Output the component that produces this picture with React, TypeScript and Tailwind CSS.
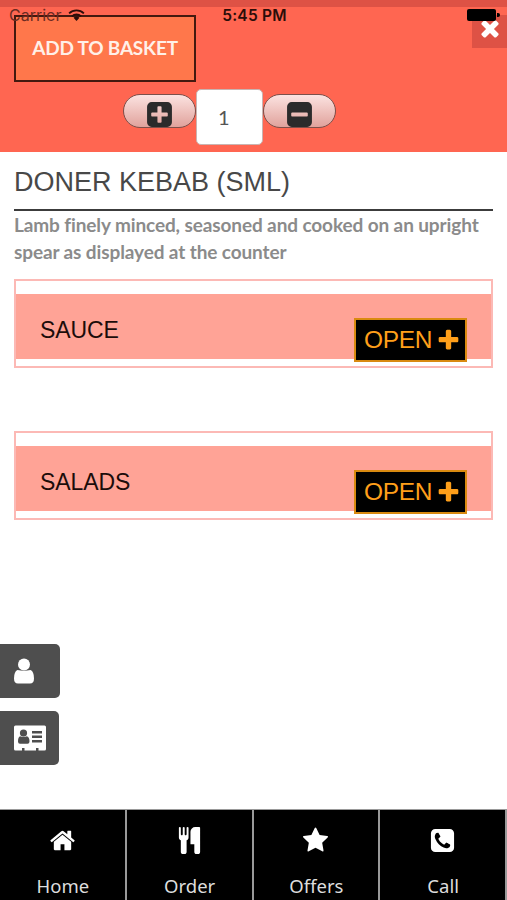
import { clsx } from 'clsx';

const SQUARE = 'm256-544v960q0 119-84.5 203.5t-203.5 84.5h-960q-119 0-203.5-84.5t-84.5-203.5v-960q0-119 84.5-203.5t203.5-84.5h960q119 0 203.5 84.5t84.5 203.5z';

const ICONS = {
  home: 'M1472 992v480q0 26-19 45t-45 19h-384v-384h-256v384h-384q-26 0-45-19t-19-45v-480q0-1 .5-3t.5-3l575-474 575 474q1 2 1 6zm223-69l-62 74q-8 9-21 11h-3q-13 0-21-7l-692-577-692 577q-12 8-24 7-13-2-21-11l-62-74q-8-10-7-23.5t11-21.5l719-599q32-26 76-26t76 26l244 204v-195q0-14 9-23t23-9h192q14 0 23 9t9 23v408l219 182q10 8 11 21.5t-7 23.5z',
  cutlery: 'M832 64v640q0 61-35.5 111t-92.5 70v779q0 52-38 90t-90 38h-128q-52 0-90-38t-38-90v-779q-57-20-92.5-70t-35.5-111v-640q0-26 19-45t45-19 45 19 19 45v416q0 26 19 45t45 19 45-19 19-45v-416q0-26 19-45t45-19 45 19 19 45v416q0 26 19 45t45 19 45-19 19-45v-416q0-26 19-45t45-19 45 19 19 45zm768 0v1600q0 52-38 90t-90 38h-128q-52 0-90-38t-38-90v-512h-224q-13 0-22.5-9.5t-9.5-22.5v-800q0-132 94-226t226-94h256q26 0 45 19t19 45z',
  star: 'M1728 647q0 22-26 48l-363 354 86 500q1 7 1 20 0 21-10.5 35.5t-30.5 14.5q-19 0-40-12l-449-236-449 236q-22 12-40 12-21 0-31.5-14.5t-10.5-35.5q0-6 2-20l86-500-364-354q-25-27-25-48 0-37 56-46l502-73 225-455q19-41 49-41t49 41l225 455 502 73q56 9 56 46z',
  phone: 'M1408 1193q0-11-2-16t-18-16.5-40.5-25-47.5-26.5-45.5-25-28.5-15q-5-3-19-13t-25-15-21-5q-15 0-36.5 20.5t-39.5 45-38.5 45-33.5 20.5q-7 0-16.5-3.5t-15.5-6.5-17-9.5-14-8.5q-99-55-170-126.5t-127-170.5q-2-3-8.5-14t-9.5-17-6.5-15.5-3.5-16.5q0-13 20.5-33.5t45-38.5 45-39.5 20.5-36.5q0-10-5-21t-15-25-13-19q-3-6-15-28.5t-25-45.5-26.5-47.5-25-40.5-16.5-18-16-2q-48 0-101 22-46 21-80 94.5t-34 130.5q0 16 2.5 34t5 30.5 9 33 10 29.5 12.5 33 11 30q60 164 216.5 320.5t320.5 216.5q6 2 30 11t33 12.5 29.5 10 33 9 30.5 5 34 2.5q57 0 130.5-34t94.5-80q22-53 22-101zm256-777v960q0 119-84.5 203.5t-203.5 84.5h-960q-119 0-203.5-84.5t-84.5-203.5v-960q0-119 84.5-203.5t203.5-84.5h960q119 0 203.5 84.5t84.5 203.5z',
  close: 'M1490 1322q0 40-28 68l-136 136q-28 28-68 28t-68-28l-294-294-294 294q-28 28-68 28t-68-28l-136-136q-28-28-28-68t28-68l294-294-294-294q-28-28-28-68t28-68l136-136q28-28 68-28t68 28l294 294 294-294q28-28 68-28t68 28l136 136q28 28 28 68t-28 68l-294 294 294 294q28 28 28 68z',
  plus: 'M1600 736v192q0 40-28 68t-68 28h-416v416q0 40-28 68t-68 28h-192q-40 0-68-28t-28-68v-416h-416q-40 0-68-28t-28-68v-192q0-40 28-68t68-28h416v-416q0-40 28-68t68-28h192q40 0 68 28t28 68v416h416q40 0 68 28t28 68z',
  plusSquare: 'M1408 960v-128q0-26-19-45t-45-19h-320v-320q0-26-19-45t-45-19h-128q-26 0-45 19t-19 45v320h-320q-26 0-45 19t-19 45v128q0 26 19 45t45 19h320v320q0 26 19 45t45 19h128q26 0 45-19t19-45v-320h320q26 0 45-19t19-45z' + SQUARE,
  minusSquare: 'M1408 960v-128q0-26-19-45t-45-19h-896q-26 0-45 19t-19 45v128q0 26 19 45t45 19h896q26 0 45-19t19-45z' + SQUARE,
};

type IconName = keyof typeof ICONS;

function Icon({ name, className }: { name: IconName; className?: string }) {
  return (
    <svg viewBox="0 0 1792 1792" fill="currentColor" className={clsx('shrink-0', className)}>
      <path d={ICONS[name]} />
    </svg>
  );
}

const TABS: { label: string; icon: IconName }[] = [
  { label: 'Home', icon: 'home' },
  { label: 'Order', icon: 'cutlery' },
  { label: 'Offers', icon: 'star' },
  { label: 'Call', icon: 'phone' },
];

// iOS status bar, sits over the header
function StatusBar() {
  return (
    <div className="pointer-events-none absolute inset-x-0 top-0 z-10 h-[30px] font-['Inter','Liberation_Sans',sans-serif] text-[#2b0d09]">
      <div className="h-[7px] bg-[#de5245]" />
      <div className="flex h-4 items-center justify-between pl-[9px] pr-[7px]">
        <div className="flex w-[180px] items-center gap-[7px]">
          <span className="text-[16px] leading-4 text-[#6c2b22]">Carrier</span>
          <svg viewBox="0 0 18 13" className="-mt-px h-[12px] w-[17px]" fill="none" stroke="currentColor" strokeWidth="2">
            <path d="M1 4.8a11.5 11.5 0 0 1 16 0M4 8a7.2 7.2 0 0 1 10 0" />
            <path d="M5.8 9.6a4.6 4.6 0 0 1 6.4 0L9 13z" fill="currentColor" stroke="none" />
          </svg>
        </div>
        <span className="pt-px text-[15.5px] font-semibold leading-4 tracking-[0.25px]">5:45 PM</span>
        <div className="flex w-[180px] items-center justify-end gap-px">
          <span className="h-3 w-[29px] rounded-[2px] bg-black" />
          <span className="h-1 w-[3px] rounded-r-full bg-black" />
        </div>
      </div>
    </div>
  );
}

function StepButton({ icon }: { icon: IconName }) {
  return (
    <button className="flex h-[34px] w-[73px] items-end justify-center rounded-full border border-[#7c4f4a] bg-linear-to-b from-[#fbe3e1] to-[#e0a29c] text-[#2b2b2b]">
      <Icon name={icon} className="-mb-[2px] size-[29px]" />
    </button>
  );
}

function OptionGroup({ title }: { title: string }) {
  return (
    <section className="h-[89px] border-2 border-[#fcb9b5] pt-[13px]">
      <div className="flex h-[65px] items-start justify-between bg-[#ffa396] pl-6 pr-6">
        <h2 className="pt-[22px] text-[23px] leading-[28px] tracking-[-0.1px] text-[#1c0c0a]">{title}</h2>
        <button className="mt-[24px] flex h-[44px] w-[113px] items-center justify-center gap-[5px] border-2 border-[#d98a10] bg-black pl-[3px] pt-px text-[#ff9f1a]">
          <span className="text-[24.5px] leading-none tracking-[-0.3px]">OPEN</span>
          <Icon name="plus" className="size-[25px] -mx-[1px] -mt-px" />
        </button>
      </div>
    </section>
  );
}

export default function App() {
  return (
    <div className="relative flex h-[900px] w-[507px] flex-col overflow-hidden bg-white font-['Liberation_Sans',sans-serif]">
      <StatusBar />

      <header className="flex h-[152px] shrink-0 flex-col bg-[#ff6651]">
        <div className="flex items-start justify-between pl-[14px] pt-[15px]">
          <button className="h-[67px] w-[182px] border-2 border-[#44190f] bg-[#ff774b] font-['Lato',sans-serif] text-[19px] font-bold tracking-[-0.2px] text-[#fff0e8]">
            ADD TO BASKET
          </button>
          <button className="flex h-[33px] w-[35px] items-center justify-center bg-[#de5245] text-white">
            <Icon name="close" className="mb-[7px] size-[26px]" />
          </button>
        </div>
        <div className="mt-[7px] flex items-start pl-[123px]">
          <div className="pt-[5px]"><StepButton icon="plusSquare" /></div>
          <div className="flex h-[56px] w-[67px] items-center rounded-[5px] border border-[#c9b4b1] bg-white pl-[21px] font-['Lato',sans-serif] text-[20px] text-[#555]">
            1
          </div>
          <div className="pt-[5px]"><StepButton icon="minusSquare" /></div>
        </div>
      </header>

      <main className="flex-1 px-[14px] pt-[14px]">
        <h1 className="h-[45px] border-b-2 border-[#3c3c3c] text-[27px] leading-[32px] text-[#484848]">DONER KEBAB (SML)</h1>
        <p className="h-[68px] font-['Lato',sans-serif] text-[19px] font-bold leading-[27px] tracking-[-0.11px] text-[#8b8b8b]">
          Lamb finely minced, seasoned and cooked on an upright<br />spear as displayed at the counter
        </p>
        <div className="flex flex-col gap-[63px]">
          <OptionGroup title="SAUCE" />
          <OptionGroup title="SALADS" />
        </div>
      </main>

      {/* Accesos laterales */}
      <aside className="absolute left-0 top-[644px] flex flex-col gap-[13px] text-white">
        <button className="flex h-[54px] w-[60px] items-center rounded-r-[5px] bg-[#4e4e4e] pl-[14px]">
          <svg viewBox="0 0 20 26" className="h-[26px] w-5" fill="currentColor">
            <circle cx="10" cy="6.5" r="6" />
            <path d="M3.500 12Q10 13.500 16.500 12Q20 13.500 20 20.500Q20 25.500 16 25.500H4Q0 25.500 0 20.500Q0 13.500 3.500 12z" />
          </svg>
        </button>
        <button className="flex h-[54px] w-[59px] items-center rounded-r-[5px] bg-[#4e4e4e] pl-[14px]">
          <svg viewBox="0 0 32 26" className="h-[26px] w-8" fill="currentColor">
            <rect y="0.500" width="32" height="25" rx="1.500" />
            <g fill="#4e4e4e">
              <circle cx="9.500" cy="8" r="3.600" />
              <path d="M6 11.200Q9.500 12.500 13 11.200Q15.500 12 15.500 16.500Q15.500 18.700 13.500 18.700H6Q4 18.700 4 16.500Q4 12 6 11.200z" />
              <path d="M18 6h10v2.500H18zM18 10.500h10v2.500H18zM18 15h10v2.500H18zM8 23h2.500v3H8zM22 23h2.500v3h-2.500z" />
            </g>
          </svg>
        </button>
      </aside>

      <nav className="flex h-[91px] shrink-0 border-t border-[#999] bg-black font-['Noto_Sans',sans-serif] text-[#ddd]">
        {TABS.map((tab) => (
          <a key={tab.label} className="flex flex-1 flex-col items-center border-r-2 border-[#999] pt-[17px]">
            <Icon name={tab.icon} className="size-[27px] text-white" />
            <span className="mt-[18px] pl-px text-[18.5px] leading-7">{tab.label}</span>
          </a>
        ))}
      </nav>
    </div>
  );
}
